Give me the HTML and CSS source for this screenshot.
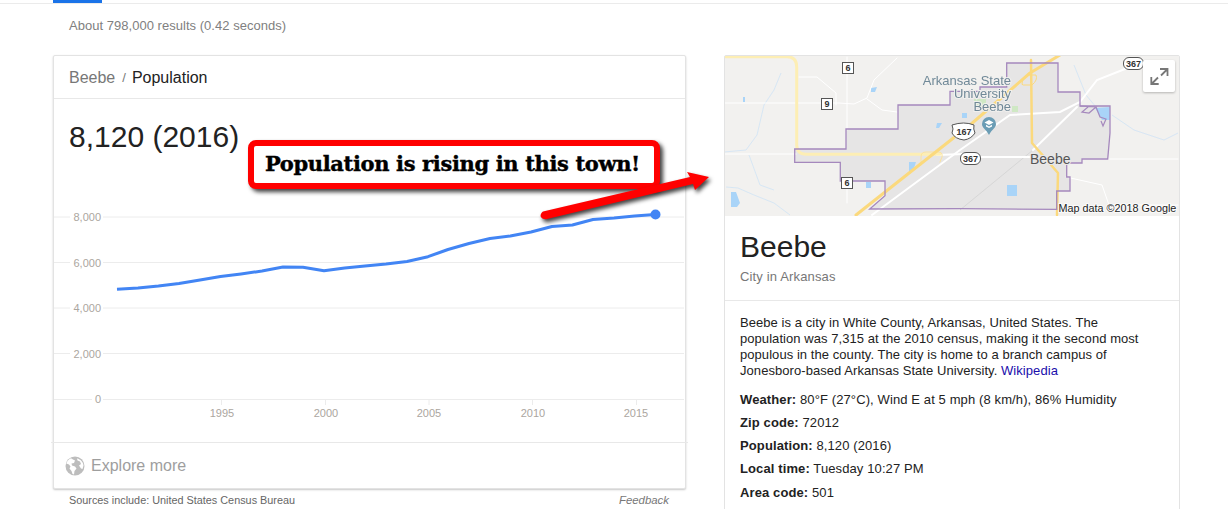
FILE: index.html
```html
<!DOCTYPE html>
<html lang="en">
<head>
<meta charset="utf-8">
<title>Beebe population</title>
<link rel="stylesheet" href="styles.css">
</head>
<body>
<div class="tabs"><span class="tab-active"></span></div>
<div class="stats">About 798,000 results (0.42 seconds)</div>
<main class="columns">
  <section class="left">
    <div class="card">
      <header class="card-head"><span class="crumb">Beebe</span><span class="sep">/</span><span class="crumb-now">Population</span></header>
      <div class="value">8,120 (2016)</div>
      <svg class="chart" viewBox="54 155 630 287" width="630" height="287">
        <g class="grid">
          <path d="M54 217H70M103 217H684M54 262.5H70M103 262.5H684M54 308H70M103 308H684M54 353.5H70M103 353.5H684M54 399.500H92M103 399.500H684"/>
          <path d="M221.500 399V405M325.500 399V405M429 399V405M532.500 399V405M636.500 399V405"/>
        </g>
        <g class="ylab">
          <text x="101" y="221">8,000</text>
          <text x="101" y="266.500">6,000</text>
          <text x="101" y="312">4,000</text>
          <text x="101" y="357.500">2,000</text>
          <text x="101" y="403">0</text>
        </g>
        <g class="xlab">
          <text x="222" y="417">1995</text>
          <text x="326" y="417">2000</text>
          <text x="429" y="417">2005</text>
          <text x="533" y="417">2010</text>
          <text x="636" y="417">2015</text>
        </g>
        <polyline class="line" points="117,289.300 138,288 158.400,286 179,283.500 200,280 220.500,276.500 241,274 262,271 283,267 303,267.300 324,270.700 344.700,268 365,266 386,264 407,261.500 428,256.700 448,249.500 469,243.500 490,238.500 510.300,236 531,232 552,226.500 572.400,225 593,219.500 614,218 634.500,216 655,214.500"/>
        <circle class="dot" cx="655.500" cy="214.500" r="5"/>
      </svg>
      <footer class="card-foot">
        <svg class="globe" viewBox="0 0 20 20" width="20" height="20">
          <circle cx="10" cy="10" r="9.500" fill="#bdbdbd"/>
          <path fill="#fff" d="M6 2.200C4 3 2 5 1.300 7.500L4 8.500 5.500 10.500 4.500 12.500 6.500 15 7.500 18 9 18.500 9.500 15 11.500 12.500 10 10.500 7 9.500 6.500 7.500 9 7 10 4.500 8 3.500ZM12 2.500 12.500 4.500 15 5.500 16 8 14 9.500 16 12.500 17.500 13 18.500 9.500C18.200 6 15.500 3.200 12 2.500Z"/>
        </svg>
        <span class="explore">Explore more</span>
      </footer>
    </div>
    <div class="sources"><span>Sources include: United States Census Bureau</span><em>Feedback</em></div>
  </section>
  <aside class="panel">
    <div class="map">
      <svg viewBox="1 1 454 160" width="454" height="160">
        <rect width="456" height="162" fill="#f2f1ef"/>
        <g class="soft">
          <g fill="none" stroke="#cfe3f5" stroke-width=".8">
            <path d="M57 18 50 35 40 50 33 80 22 95 0 97M2 132 14 133 30 140 50 148 66 160M25 100 36 130 50 135M190 75 198 92 200 118M280 45 300 42 330 45 356 52M388 60 410 75 440 85 454 78M350 10 362 40 372 52"/>
          </g>
          <path class="city" d="M70.700 94H122V74H174V50H226V36.300H256V32H282.700V8H334V37H356V51H386V78L383.700 104H358V108H342.700V122H346V136H332.700V154.300L236 153.700 145.700 154 161 140.700V126H116.300V107.300H70.700Z"/>
          <g fill="#a9d4f8">
            <path d="M7 137H12L16 148 13 152H7ZM142 127H147V133H142ZM185 107H192L189 116H185ZM283 130H293V141H283ZM371 53 386 52V65H378ZM147 33l6-1-2 5h-4ZM19 42h2v5h-2ZM213 68h5l-3 5h-3ZM238 58h5v5h-5Z"/>
          </g>
          <g fill="#cfe8c4"><path d="M250 44H262V52H250ZM288 51H294V57H288Z"/></g>
          <path fill="none" stroke="#d2d2d2" stroke-width=".8" d="M236 155 309 95"/>
          <g fill="none" stroke="#fff" stroke-linecap="round">
            <g stroke-width="1">
              <path d="M0 48H115L130 49 143 43 150 25 173 3M123 2V75M75 22H93L112 38V50M143 44 158 55 173 57M0 99H72M123 127V148M342 122 378 130 385 150H454M358 104H454"/>
            </g>
            <g stroke-width="2">
              <path d="M148 160 236 95 286 60 336 57 356 47 373 25 406 12"/>
              <path d="M213 100 240 99M249 102 306 102"/>
              <path d="M309 95 353 52"/>
            </g>
          </g>
          <g fill="none" stroke-linecap="round" stroke-linejoin="round">
            <path stroke="#fdeeb4" stroke-width="3" d="M0 1.700H63Q72.700 1.700 72.700 12V90Q73 99.300 82 99.300H216"/>
            <path stroke="#fde39a" stroke-width="1" d="M197 110V102Q197 97 202 97H214Q219 97 218 102L216 107"/>
            <path stroke="#fbd97d" stroke-width="3" d="M132 160 230 82.500M246 70 306 18 336 0"/>
            <path stroke="#fbd97d" stroke-width="2.500" d="M307 5 308 88 334 118 333 160"/>
            <path stroke="#fbd97d" stroke-width="1" d="M298 29Q298 22 304 20H312Q314 25 308 30H300Z"/>
          </g>
          <path class="city-line" d="M70.700 94H122V74H174V50H226V36.300H256V32H282.700V8H334V37H356V51H386V78L383.700 104H358V108H342.700V122H346V136H332.700V154.300L236 153.700 145.700 154 161 140.700V126H116.300V107.300H70.700Z"/>
          <path fill="none" stroke="#a588bd" stroke-width="1.200" d="M356 51 372 52 365 58 358 57 364 52M372 52 376 62 382 64 379 71 377 66"/>
        </g>
        <g class="mapinfo">
          <text x="287" y="30">Arkansas State</text>
          <text x="287" y="43">University</text>
          <text x="287" y="56">Beebe</text>
        </g>
        <path fill="#6b9db5" d="M265 62a7 7 0 0 1 7 7c0 4-4 5-7 11-3-6-7-7-7-11a7 7 0 0 1 7-7Z"/>
        <path fill="#fff" d="M265 65l4.500 2.500-4.500 2.500-4.500-2.500ZM262 69.700l3 1.800 3-1.800v1.800l-3 1.500-3-1.500Z"/>
        <g class="shield">
          <rect x="118.500" y="7.500" width="11" height="11"/><text x="124" y="16">6</text>
          <rect x="97.500" y="43.500" width="11" height="11"/><text x="103" y="52">9</text>
          <rect x="117.500" y="122.500" width="11" height="11"/><text x="123" y="131">6</text>
        </g>
        <g class="pill">
          <path class="usmark" d="M228 70Q240 66 250 70 249 74 251 78 247 84 240 85 231 84 228 78 230 74 228 70Z"/><text x="240" y="80">167</text>
          <rect x="399.500" y="2.500" width="20" height="12" rx="5.500"/><text x="409.500" y="12">367</text>
          <rect x="236.500" y="97.500" width="20" height="12" rx="5.500"/><text x="246.500" y="107">367</text>
        </g>
        <text class="city-name" x="306" y="109">Beebe</text>
        <text class="attribution" x="334.500" y="157">Map data ©2018 Google</text>
        <g class="expand-btn">
          <rect x="419" y="5" width="32" height="32" rx="2"/>
          <path d="M436 14H443.500V21M443 14.500 437 20.500M427.300 22V29H434.700M428 28.500 434 22.500"/>
        </g>
      </svg>
    </div>
    <div class="title-block">
      <h1>Beebe</h1>
      <div class="subtitle">City in Arkansas</div>
    </div>
    <div class="details">
      <p class="desc">Beebe is a city in White County, Arkansas, United States. The population was 7,315 at the 2010 census, making it the second most populous in the county. The city is home to a branch campus of Jonesboro-based Arkansas State University. <a href="#">Wikipedia</a></p>
      <div class="fact"><b>Weather:</b> 80°F (27°C), Wind E at 5 mph (8 km/h), 86% Humidity</div>
      <div class="fact"><b>Zip code:</b> 72012</div>
      <div class="fact"><b>Population:</b> 8,120 (2016)</div>
      <div class="fact"><b>Local time:</b> Tuesday 10:27 PM</div>
      <div class="fact fact-last"><b>Area code:</b> 501</div>
    </div>
  </aside>
</main>
<div class="callout">Population is rising in this town!</div>
<svg class="arrow" viewBox="0 0 180 60" width="180" height="60">
  <path d="M6 39.500C4 40.500 3 44 4 45 5 47 8 47.500 10 47L156 12 158 18 172 5 150 0 153 5Z" fill="#f00"/>
</svg>
</body>
</html>
```

FILE: styles.css
```css
html, body {
  margin: 0;
  height: 509px;
  overflow: hidden;
  background: #fff;
  font-family: "Liberation Sans", Arial, sans-serif;
  color: #222;
}
.tabs {
  height: 3px;
  border-bottom: 1px solid #ebebeb;
  padding-left: 53px;
}
.tab-active {
  display: block;
  width: 49px;
  height: 3px;
  background: #1a73e8;
}
.stats {
  padding: 14px 0 0 69px;
  font-size: 13px;
  line-height: 16px;
  letter-spacing: .03px;
  color: #808080;
  height: 37px;
}
.columns {
  display: flex;
  align-items: flex-start;
  gap: 38px;
  padding: 0 0 0 53px;
}
.left { width: 633px; flex: none; }
.card {
  box-sizing: border-box;
  height: 434px;
  border: 1px solid #e3e3e3;
  border-radius: 2px;
  box-shadow: 0 1px 2px rgba(0, 0, 0, .22);
  background: #fff;
}
.card-head {
  box-sizing: border-box;
  display: flex;
  align-items: center;
  height: 43px;
  padding: 1px 0 0 15px;
  border-bottom: 1px solid #e8e8e8;
  font-size: 16px;
}
.crumb { color: #777; }
.sep { color: #777; font-size: 13px; margin: 0 6px 0 7px; }
.crumb-now { color: #222; }
.value {
  padding: 20px 0 0 15px;
  font-size: 30px;
  line-height: 36px;
  color: #222;
}
.chart { display: block; }
.grid path { stroke: #ececec; stroke-width: 1; fill: none; }
.ylab text, .xlab text {
  font-size: 11px;
  fill: #aba6a0;
}
.ylab text { text-anchor: end; }
.xlab text { text-anchor: middle; }
.line {
  fill: none;
  stroke: #4285f4;
  stroke-width: 3;
  stroke-linejoin: round;
}
.dot { fill: #4285f4; }
.card-foot {
  box-sizing: border-box;
  display: flex;
  align-items: center;
  gap: 6px;
  height: 46px;
  margin: 0 -3px;
  padding: 1px 0 0 14px;
  border-top: 1px solid #e8e8e8;
}
.globe { display: block; }
.explore { font-size: 16px; color: #9e9e9e; }
.sources {
  display: flex;
  justify-content: space-between;
  padding: 4px 17px 0 16px;
  font-size: 10.850px;
  line-height: 14px;
  color: #666;
}
.sources em { color: #777; font-size: 11.400px; }
.panel {
  box-sizing: border-box;
  width: 456px;
  height: 460px;
  flex: none;
  border: 1px solid #e3e3e3;
  border-radius: 2px;
  background: #fff;
}
.map { height: 160px; }
.map svg { display: block; }
.soft { filter: blur(.35px); }
.city { fill: #e6e5e5; }
.city-line { fill: none; stroke: #a588bd; stroke-width: 1.300; }
.mapinfo text {
  font-size: 13px;
  fill: #6a8494;
  stroke: #f2f1ef;
  stroke-width: 2px;
  paint-order: stroke;
  text-anchor: end;
  opacity: .95;
}
.shield rect { fill: #fff; stroke: #555; stroke-width: 1; }
.shield text {
  font-size: 9px;
  font-weight: bold;
  fill: #333;
  text-anchor: middle;
}
.pill rect, .usmark { fill: #fff; stroke: #555; stroke-width: 1; }
.pill text { font-size: 9px; fill: #333; text-anchor: middle; font-weight: bold; }
.city-name {
  font-size: 14px;
  fill: #555;
  stroke: #e9e8e8;
  stroke-width: 2px;
  paint-order: stroke;
}
.attribution {
  font-size: 10.800px;
  fill: #222;
  stroke: rgba(255, 255, 255, .7);
  stroke-width: 2px;
  paint-order: stroke;
}
.expand-btn rect {
  fill: #fff;
  filter: drop-shadow(0 1px 1px rgba(0, 0, 0, .25));
}
.expand-btn path { fill: none; stroke: #777; stroke-width: 1.800; }
.title-block {
  height: 84px;
  padding: 0 15px;
  border-bottom: 1px solid #e8e8e8;
}
.title-block h1 {
  margin: 0;
  padding-top: 13px;
  font-size: 30px;
  line-height: 36px;
  font-weight: normal;
  color: #222;
}
.subtitle {
  margin-top: 3px;
  font-size: 13px;
  line-height: 18px;
  letter-spacing: .15px;
  color: #777;
}
.details {
  padding: 14px 15px 0;
  font-size: 13px;
  line-height: 16px;
  letter-spacing: .11px;
  color: #222;
}
.desc { margin: 0 0 13px; width: 410px; letter-spacing: .06px; }
.desc a { color: #1a0dab; text-decoration: none; }
.fact { height: 23px; line-height: 16px; }
.fact-last { padding-top: 1px; }
.fact b { color: #222; }
.callout {
  position: absolute;
  left: 248px;
  top: 140px;
  box-sizing: border-box;
  width: 412px;
  height: 49px;
  padding-left: 11px;
  border: 6px solid #f00;
  border-radius: 8px;
  background: #fff;
  box-shadow: 3px 3px 4px rgba(0, 0, 0, .75);
  font-family: "DejaVu Serif", serif;
  font-weight: bold;
  font-size: 21px;
  letter-spacing: -.36px;
  -webkit-text-stroke: .4px #000;
  line-height: 35px;
  color: #000;
  white-space: nowrap;
}
.arrow {
  position: absolute;
  left: 537px;
  top: 172px;
  filter: drop-shadow(2px 3px 2px rgba(0, 0, 0, .75));
  overflow: visible;
}
```
